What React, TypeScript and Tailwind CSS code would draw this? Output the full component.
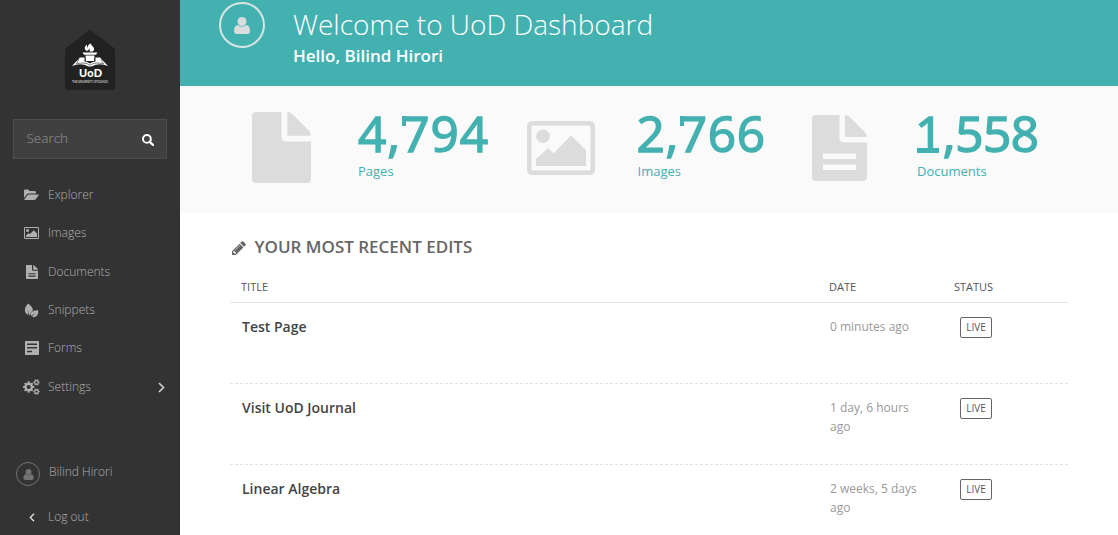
import React from "react";

const sans = "font-['Open_Sans','Noto_Sans',sans-serif]";

function PageIcon({ className, lines = false }: { className?: string; lines?: boolean }) {
  return (
    <svg viewBox="0 0 60 72" preserveAspectRatio="none" className={className} fill="currentColor">
      <path
        fillRule="evenodd"
        d={
          "M4 0H30V25Q30 30 35 30H60V68Q60 72 56 72H4Q0 72 0 68V4Q0 0 4 0Z" +
          (lines ? "M12 42V48H48V42ZM12 54V60H48V54Z" : "")
        }
      />
      <path d="M36 0Q39 0 41 2L58 19Q60 21 60 24H36Z" />
    </svg>
  );
}

function ImageIcon({ className }: { className?: string }) {
  return (
    <svg viewBox="0 0 68 54" className={className} fill="currentColor">
      <path fillRule="evenodd" d="M6 0H62Q68 0 68 6V48Q68 54 62 54H6Q0 54 0 48V6Q0 0 6 0ZM6 4.500Q4.500 4.500 4.500 6V48Q4.500 49.500 6 49.500H62Q63.500 49.500 63.500 48V6Q63.500 4.500 62 4.500Z" />
      <circle cx="16" cy="15.300" r="6.800" />
      <path d="M9 45V38L21 27L26.500 32.500L44 14.500L59 29V45Z" />
    </svg>
  );
}

function UserIcon({ className }: { className?: string }) {
  return (
    <svg viewBox="0 0 16 17" className={className} fill="currentColor">
      <circle cx="8" cy="4.500" r="4.500" />
      <path d="M4 8Q8 11.500 12 8Q16 8.500 16 14Q16 17 13 17H3Q0 17 0 14Q0 8.500 4 8Z" />
    </svg>
  );
}

function FolderIcon() {
  return (
    <svg viewBox="0 0 15 12" className="h-3 w-[15px]" fill="currentColor">
      <path d="M0 9V1.500Q0 .5 1 .5H4Q5 .5 5 1.500V2H10.500Q12 2 12 3.500V4.500H5Q3.500 4.500 2.600 5.600Z" />
      <path d="M5 5.500H14.500Q15.200 5.500 14.700 6.200L12 10Q11.200 11 10 11H.8Q0 11 .5 10.300L3.200 6.500Q4 5.500 5 5.500Z" />
    </svg>
  );
}

function LeavesIcon() {
  return (
    <svg viewBox="0 0 15 15" className="h-[15px] w-[15px]" fill="currentColor">
      <path d="M4 .5Q8.500 3.500 9 7Q6.500 9 5.800 12.500L5.100 12L3.700 5.500L4.300 11.700Q1.300 11 .8 7.500Q.6 4 4 .5Z" />
      <path d="M14.200 7.200Q14.700 12 11.500 13.800Q9.700 14.600 8 13.500L11.800 9.600L7.200 13Q6 10.300 8.200 8.600Q10.500 7.200 14.200 7.200Z" />
    </svg>
  );
}

function FormIcon() {
  return (
    <svg viewBox="0 0 14 14" className="h-3.5 w-3.5" fill="currentColor">
      <path fillRule="evenodd" d="M0 0H14V14H0ZM2 2.500V4H12V2.500ZM2 6V7.500H12V6ZM2 9.700V11.200H7V9.700Z" />
    </svg>
  );
}

function gear(cx: number, cy: number, r: number, hole: number, teeth: number) {
  const pts: string[] = [];
  for (let i = 0; i < teeth; i++) {
    const a = (i * 2 * Math.PI) / teeth;
    const s = Math.PI / teeth;
    const at = (t: number, q: number) => `${(cx + q * Math.cos(t)).toFixed(2)} ${(cy + q * Math.sin(t)).toFixed(2)}`;
    pts.push(at(a - s * 0.6, r * 0.76), at(a - s * 0.4, r), at(a + s * 0.4, r), at(a + s * 0.6, r * 0.76));
  }
  return `M${pts.join("L")}ZM${cx - hole} ${cy}a${hole} ${hole} 0 1 0 ${hole * 2} 0a${hole} ${hole} 0 1 0 ${-hole * 2} 0Z`;
}

function GearsIcon() {
  return (
    <svg viewBox="0 0 17 16" className="h-4 w-[17px] shrink-0" fill="currentColor" fillRule="evenodd">
      <path d={gear(5.7, 8, 5.7, 2.1, 8)} />
      <path d={gear(13.5, 3.4, 3.2, 1.2, 6)} />
      <path d={gear(13.5, 12.6, 3.2, 1.2, 6)} />
    </svg>
  );
}

function PencilIcon() {
  return (
    <svg viewBox="128 128 1536 1536" className="h-[14px] w-[14px]" fill="currentColor">
      <path d="M491 1536l91-91-235-235-91 91v107h128v128h107zm523-928q0-22-22-22-10 0-17 7l-542 542q-7 7-7 17 0 22 22 22 10 0 17-7l542-542q7-7 7-17zm-54-192l416 416-832 832h-416v-416zm683 96q0 53-37 90l-166 166-416-416 166-165q36-38 90-38 53 0 91 38l235 234q37 39 37 91z" />
    </svg>
  );
}

function SearchIcon() {
  return (
    <svg viewBox="0 0 12 12" className="h-3 w-3" fill="none" stroke="currentColor">
      <circle cx="4.900" cy="4.900" r="3.900" strokeWidth="2" />
      <path d="M7.900 7.900L11 11" strokeWidth="2.300" strokeLinecap="round" />
    </svg>
  );
}

function Logo() {
  return (
    <svg viewBox="0 0 50 62" className="h-[62px] w-[50px]">
      <path d="M25 1.500L49 20Q50 21 50 22V60Q50 62 48 62H2Q0 62 0 60V22Q0 21 1 20Z" fill="#222" />
      <g fill="#fff">
        <path d="M21.500 23Q17.500 20 22 16.500Q21.500 19 23 19.500Q22 17 26 15.500Q26 17.500 28 18.700Q30.500 21 27.800 23.500H24.500Q25.500 22 24 20.500Q24 22.500 21.500 23Z" />
        <path d="M17.500 24.500H32.500L31 26.800H19ZM20.500 27.500H29.500L29 33H21Z" />
        <path d="M15 29.500H19.500V33.500Q22 33.500 25 35.500Q28 33.500 30.500 33.500V29.500H35L43 38Q34 34.500 26.500 38.500H23.500Q16 34.500 7 38Z" />
      </g>
      <path d="M14 31L11.500 36Q20 33.500 25 37.300Q30 33.500 38.500 36L36 31" fill="none" stroke="#222" strokeWidth=".6" />
      <text x="25.500" y="49" textAnchor="middle" fontFamily="Lato, sans-serif" fontSize="11" fontWeight="900" textLength="23" fill="#fff">UoD</text>
      <text x="25" y="55" textAnchor="middle" fontFamily="Lato, sans-serif" fontSize="3" fontWeight="700" textLength="36" fill="#bbb">THE UNIVERSITY OF DUHOK</text>
    </svg>
  );
}

function Chevron({ left = false }: { left?: boolean }) {
  return (
    <svg viewBox="0 0 7 11" className={left ? "h-[9px] w-[6px]" : "h-[11px] w-[7px]"} fill="none" stroke="currentColor" strokeWidth="1.700">
      <path d={left ? "M6 1L1.500 5.500L6 10" : "M1 1L5.500 5.500L1 10"} />
    </svg>
  );
}

/* Figures carry a slab on the top-left of each 7 and a foot below each 1. */
function Figure({ value, className }: { value: string; className: string }) {
  return (
    <div className={`flex h-[52px] text-[49.5px] leading-[52px] [-webkit-text-stroke:1.5px_#43b1b0] ${className}`}>
      {value.split("").map((c, i) => (
        <span key={i} className="relative">
          {c}
          {c === "7" && <i className="absolute top-[9px] left-[1px] h-[10px] w-[4px] bg-[#43b1b0]" />}
          {c === "1" && <i className="absolute top-[41px] left-[2px] h-[5px] w-[22px] bg-[#43b1b0]" />}
        </span>
      ))}
    </div>
  );
}

const menu = [
  { label: "Explorer", icon: <FolderIcon /> },
  { label: "Images", icon: <ImageIcon className="h-3.5 w-[15px]" /> },
  { label: "Documents", icon: <PageIcon lines className="h-3.5 w-3" /> },
  { label: "Snippets", icon: <LeavesIcon /> },
  { label: "Forms", icon: <FormIcon /> },
  { label: "Settings", icon: <GearsIcon />, more: true },
];

const stats = [
  { value: "4,794", label: "Pages", tracking: "tracking-[1px]", icon: <PageIcon className="-mt-px h-[71px] w-[59px]" /> },
  { value: "2,766", label: "Images", tracking: "-ml-px tracking-[0.6px]", icon: <ImageIcon className="h-[54px] w-[68px]" /> },
  { value: "1,558", label: "Documents", tracking: "-ml-0.5 tracking-[-0.5px]", icon: <PageIcon lines className="mr-0.5 h-[66px] w-[55px]" /> },
];

const edits = [
  { title: "Test Page", date: "0 minutes ago" },
  { title: "Visit UoD Journal", date: "1 day, 6 hours ago" },
  { title: "Linear Algebra", date: "2 weeks, 5 days ago" },
];

export default function App() {
  return (
    <div className={`flex h-[535px] w-[1118px] overflow-hidden bg-white ${sans}`}>
      <aside className="flex w-[180px] shrink-0 flex-col bg-[#333] text-[12px] leading-[18px] font-light text-[#b0b0b0]">
        <div className="flex justify-center pt-7">
          <Logo />
        </div>
        <div className="mx-[13px] mt-[29px] flex h-10 items-center justify-between border border-[#4e4e4e] bg-[#404040] pr-3 pl-[12.5px]">
          <span className="-mt-0.5 text-[13.5px] text-[#999]">Search</span>
          <span className="mt-0.5 text-white"><SearchIcon /></span>
        </div>
        <nav className="mt-[16.7px]">
          {menu.map((m) => (
            <a key={m.label} className="flex h-[38.4px] items-center pl-[23px]">
              <span className="flex w-[17px] justify-center">{m.icon}</span>
              <span className="ml-2">{m.label}</span>
              {m.more && <span className="mt-0.5 mr-[15px] ml-auto text-[#ccc]"><Chevron /></span>}
            </a>
          ))}
        </nav>
        <div className="mt-[52.3px] flex items-center pl-4">
          <span className="mt-1 flex h-6 w-6 items-center justify-center rounded-full border border-[#747474] text-[#747474]">
            <UserIcon className="h-[11px] w-[11px]" />
          </span>
          <span className="ml-[9px]">Bilind Hirori</span>
        </div>
        <div className="mt-[22px] flex items-center pl-[29px]">
          <span className="text-[#ddd]"><Chevron left /></span>
          <span className="ml-[13px]">Log out</span>
        </div>
      </aside>
      <main className="min-w-0 flex-1">
        <header className="flex h-[86px] bg-[#43b1b0] pl-[39px] text-white">
          <span className="mt-0.5 flex h-[46px] w-[46px] items-center justify-center rounded-full border-2 border-[#d9e4e4] text-[#d9dddd]">
            <UserIcon className="h-[17px] w-4" />
          </span>
          <div className="ml-7">
            <h1 className="mt-[3px] text-[28px] leading-[42px] font-light whitespace-nowrap">Welcome to UoD Dashboard</h1>
            <p className="mt-px text-[17px] leading-5 font-semibold">Hello, Bilind Hirori</p>
          </div>
        </header>
        <section className="flex h-[127px] bg-[#fafafa] pl-[61px]">
          {stats.map((s) => (
            <div key={s.label} className="flex w-[279.5px] shrink-0">
              <div className="flex h-[124px] w-20 items-center justify-center text-[#dcdcdc]">{s.icon}</div>
              <div className="ml-[37px] pt-[21px] text-[#43b1b0]">
                <Figure value={s.value} className={s.tracking} />
                <div className="mt-[3px] text-[13px] leading-[18px]">{s.label}</div>
              </div>
            </div>
          ))}
        </section>
        <section className="mr-[50px] ml-[50px] pt-[22px]">
          <h2 className="flex h-6 items-center text-[17px] font-semibold text-[#666]">
            <span className="mt-0.5 mr-[8.5px] ml-0.5"><PencilIcon /></span>
            YOUR MOST RECENT EDITS
          </h2>
          <div className="mt-[11px] grid h-[33px] grid-cols-[599px_125px_1fr] items-center border-b border-[#e3e3e3] pt-0.5 text-[11px] text-[#555]">
            <span className="pl-[11px]">TITLE</span>
            <span>DATE</span>
            <span>STATUS</span>
          </div>
          {edits.map((e) => (
            <div key={e.title} className="grid h-[81px] grid-cols-[600px_130px_1fr] border-b border-dashed border-[#e3e3e3] pt-[14px]">
              <span className="pl-3 text-[14px] leading-5 font-semibold text-[#444]">{e.title}</span>
              <span className="w-[92px] text-[12px] leading-[19px] text-[#999]">{e.date}</span>
              <span className="flex h-[21px] w-8 items-center justify-center rounded-[2px] border border-[#666] text-[10px] text-[#555]">LIVE</span>
            </div>
          ))}
        </section>
      </main>
    </div>
  );
}
